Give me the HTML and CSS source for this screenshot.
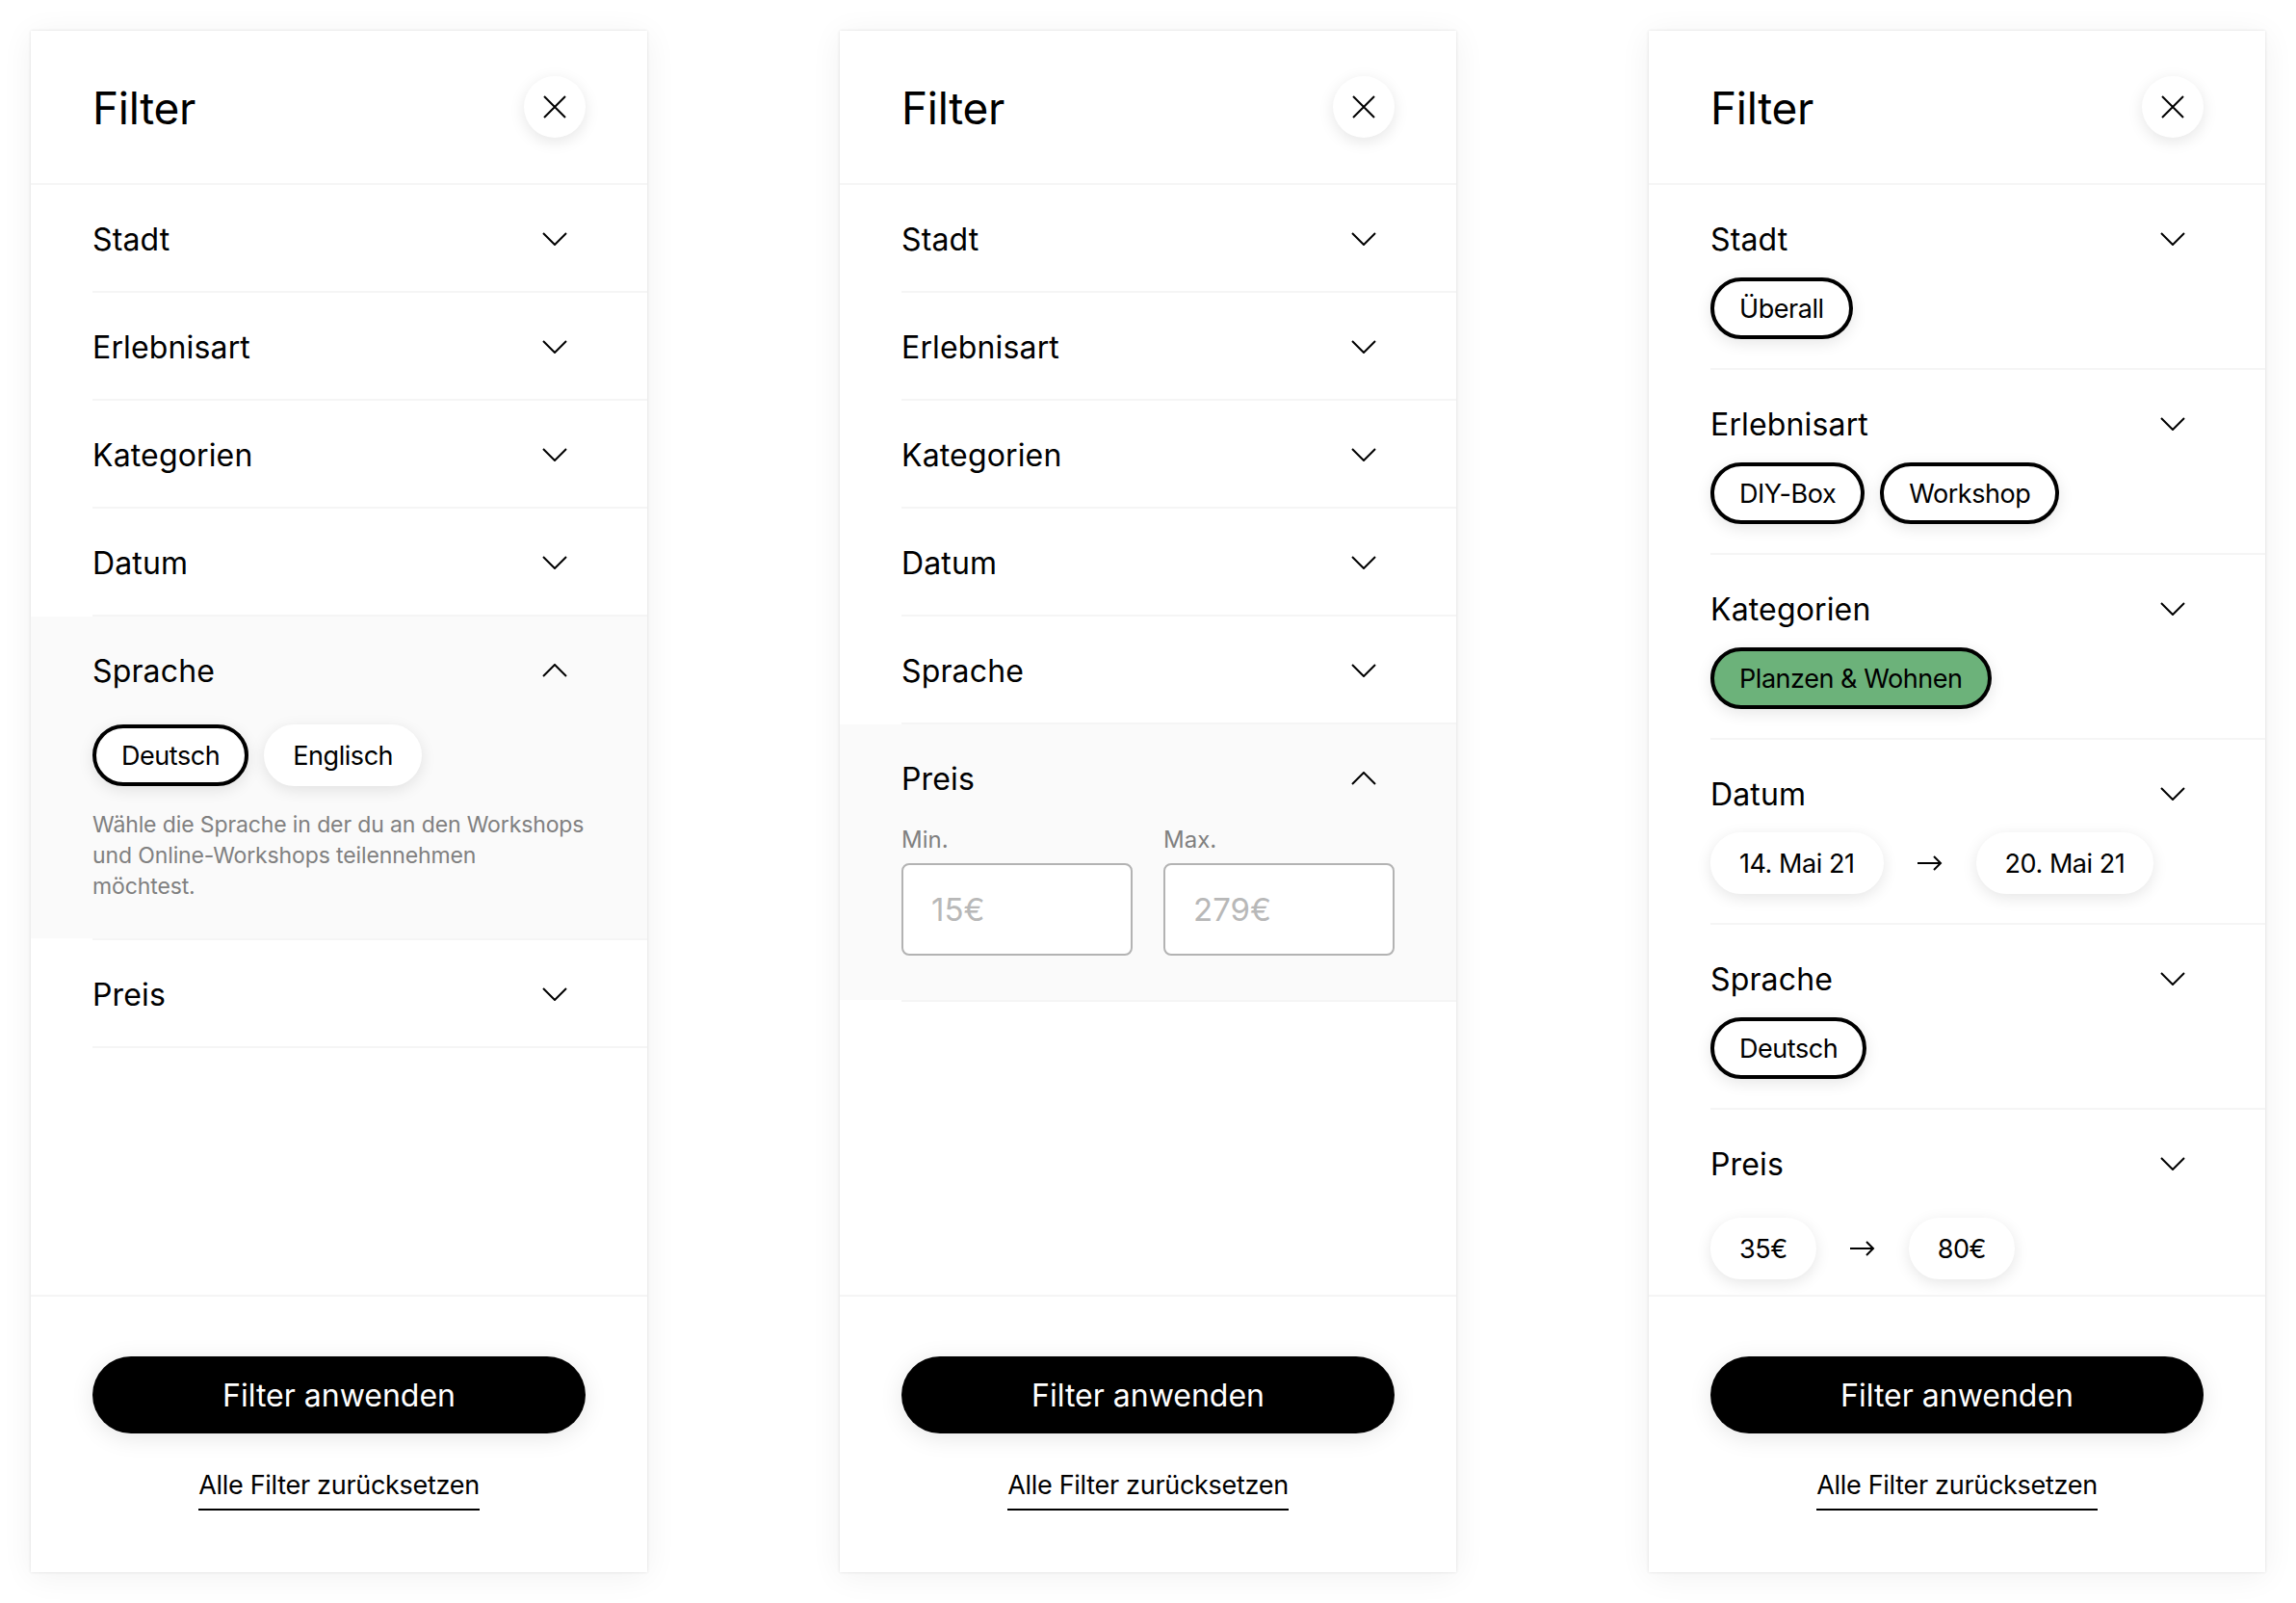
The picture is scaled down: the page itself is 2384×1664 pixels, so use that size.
FILE: index.html
```html
<!DOCTYPE html>
<html lang="de">
<head>
    <meta charset="UTF-8">
    <title>Filter</title>
    <link rel="stylesheet" href="styles.css">
</head>
<body>
    <svg class="sprite" width="0" height="0">
        <symbol id="i-chevron" viewBox="0 0 26 14"><path d="M1 1l12 12L25 1" fill="none" stroke="currentColor" stroke-width="2"/></symbol>
        <symbol id="i-close" viewBox="0 0 24 24"><path d="M1 1l22 22M23 1L1 23" fill="none" stroke="currentColor" stroke-width="2"/></symbol>
        <symbol id="i-arrow" viewBox="0 0 26 16"><path d="M0 8h24M17 1l7 7-7 7" fill="none" stroke="currentColor" stroke-width="2"/></symbol>
    </svg>

    <div class="screens">
        <!-- Sprache open -->
        <div class="panel">
            <div class="panel-head">
                <h1>Filter</h1>
                <button class="close-btn"><svg class="icon-close"><use href="#i-close"/></svg></button>
            </div>
            <div class="filter-list">
                <div class="filter-item"><div class="filter-head"><span>Stadt</span><svg class="chevron"><use href="#i-chevron"/></svg></div></div>
                <div class="filter-item"><div class="filter-head"><span>Erlebnisart</span><svg class="chevron"><use href="#i-chevron"/></svg></div></div>
                <div class="filter-item"><div class="filter-head"><span>Kategorien</span><svg class="chevron"><use href="#i-chevron"/></svg></div></div>
                <div class="filter-item"><div class="filter-head"><span>Datum</span><svg class="chevron"><use href="#i-chevron"/></svg></div></div>
                <div class="filter-item open">
                    <div class="filter-head"><span>Sprache</span><svg class="chevron up"><use href="#i-chevron"/></svg></div>
                    <div class="chips">
                        <span class="chip selected">Deutsch</span>
                        <span class="chip">Englisch</span>
                    </div>
                    <p class="hint">Wähle die Sprache in der du an den Workshops<br>und Online-Workshops teilennehmen<br>möchtest.</p>
                </div>
                <div class="filter-item"><div class="filter-head"><span>Preis</span><svg class="chevron"><use href="#i-chevron"/></svg></div></div>
            </div>
            <div class="panel-foot">
                <button class="apply-btn">Filter anwenden</button>
                <a href="#" class="reset-link">Alle Filter zurücksetzen</a>
            </div>
        </div>

        <!-- Preis open -->
        <div class="panel">
            <div class="panel-head">
                <h1>Filter</h1>
                <button class="close-btn"><svg class="icon-close"><use href="#i-close"/></svg></button>
            </div>
            <div class="filter-list">
                <div class="filter-item"><div class="filter-head"><span>Stadt</span><svg class="chevron"><use href="#i-chevron"/></svg></div></div>
                <div class="filter-item"><div class="filter-head"><span>Erlebnisart</span><svg class="chevron"><use href="#i-chevron"/></svg></div></div>
                <div class="filter-item"><div class="filter-head"><span>Kategorien</span><svg class="chevron"><use href="#i-chevron"/></svg></div></div>
                <div class="filter-item"><div class="filter-head"><span>Datum</span><svg class="chevron"><use href="#i-chevron"/></svg></div></div>
                <div class="filter-item"><div class="filter-head"><span>Sprache</span><svg class="chevron"><use href="#i-chevron"/></svg></div></div>
                <div class="filter-item open">
                    <div class="filter-head"><span>Preis</span><svg class="chevron up"><use href="#i-chevron"/></svg></div>
                    <div class="price-fields">
                        <label class="price-field">Min.<input type="text" placeholder="15€"></label>
                        <label class="price-field">Max.<input type="text" placeholder="279€"></label>
                    </div>
                </div>
            </div>
            <div class="panel-foot">
                <button class="apply-btn">Filter anwenden</button>
                <a href="#" class="reset-link">Alle Filter zurücksetzen</a>
            </div>
        </div>

        <!-- Everything selected -->
        <div class="panel">
            <div class="panel-head">
                <h1>Filter</h1>
                <button class="close-btn"><svg class="icon-close"><use href="#i-close"/></svg></button>
            </div>
            <div class="filter-list">
                <div class="filter-item summary">
                    <div class="filter-head"><span>Stadt</span><svg class="chevron"><use href="#i-chevron"/></svg></div>
                    <div class="chips"><span class="chip selected">Überall</span></div>
                </div>
                <div class="filter-item summary">
                    <div class="filter-head"><span>Erlebnisart</span><svg class="chevron"><use href="#i-chevron"/></svg></div>
                    <div class="chips"><span class="chip selected">DIY-Box</span><span class="chip selected">Workshop</span></div>
                </div>
                <div class="filter-item summary">
                    <div class="filter-head"><span>Kategorien</span><svg class="chevron"><use href="#i-chevron"/></svg></div>
                    <div class="chips"><span class="chip selected green">Planzen &amp; Wohnen</span></div>
                </div>
                <div class="filter-item summary">
                    <div class="filter-head"><span>Datum</span><svg class="chevron"><use href="#i-chevron"/></svg></div>
                    <div class="chips range"><span class="chip">14. Mai 21</span><svg class="arrow"><use href="#i-arrow"/></svg><span class="chip">20. Mai 21</span></div>
                </div>
                <div class="filter-item summary">
                    <div class="filter-head"><span>Sprache</span><svg class="chevron"><use href="#i-chevron"/></svg></div>
                    <div class="chips"><span class="chip selected">Deutsch</span></div>
                </div>
                <div class="filter-item summary price-summary">
                    <div class="filter-head"><span>Preis</span><svg class="chevron"><use href="#i-chevron"/></svg></div>
                    <div class="chips range"><span class="chip">35€</span><svg class="arrow"><use href="#i-arrow"/></svg><span class="chip">80€</span></div>
                </div>
            </div>
            <div class="panel-foot">
                <button class="apply-btn">Filter anwenden</button>
                <a href="#" class="reset-link">Alle Filter zurücksetzen</a>
            </div>
        </div>
    </div>
</body>
</html>
```

FILE: styles.css
```css
* {
    margin: 0;
    padding: 0;
    box-sizing: border-box;
}

body {
    font-family: 'Inter', 'Liberation Sans', sans-serif;
    background: white;
    color: black;
}

.sprite {
    display: block;
    height: 0;
}

.screens {
    display: flex;
    gap: 200px;
    padding: 32px;
}

.panel {
    width: 640px;
    height: 1600px;
    display: flex;
    flex-direction: column;
    background: white;
    box-shadow: 0 0 3px rgba(0,0,0,0.12), 0 4px 32px rgba(0,0,0,0.06);
}

.panel-head {
    height: 160px;
    flex: none;
    display: flex;
    align-items: center;
    justify-content: space-between;
    padding: 0 64px;
    border-bottom: 2px solid #f5f5f5;
}

h1 {
    padding-top: 2px;
    font-size: 46px;
    font-weight: 400;
    letter-spacing: -0.3px;
}

.close-btn {
    width: 64px;
    height: 64px;
    display: flex;
    align-items: center;
    justify-content: center;
    border: none;
    border-radius: 50%;
    background: white;
    color: black;
    box-shadow: 0 4px 16px rgba(0,0,0,0.1);
}

.icon-close {
    width: 24px;
    height: 24px;
}

.filter-list {
    flex: 1;
    overflow: hidden;
}

.filter-item {
    margin-left: 64px;
    padding-right: 64px;
    border-bottom: 2px solid #f5f5f5;
}

.filter-item.open {
    margin-left: 0;
    padding-left: 64px;
    padding-bottom: 2px;
    border-bottom: none;
    background:
        linear-gradient(90deg, transparent 64px, #f5f5f5 64px) bottom / 100% 2px no-repeat,
        linear-gradient(#fafafa, #fafafa) top / 100% calc(100% - 2px) no-repeat;
}

.filter-head {
    height: 110px;
    display: flex;
    align-items: center;
    justify-content: space-between;
    padding: 2px 19px 0 0;
    font-size: 32px;
    letter-spacing: 0.15px;
}

.chevron {
    width: 26px;
    height: 14px;
}

.chevron.up {
    transform: rotate(180deg);
}

.open .filter-head {
    height: 112px;
    padding-top: 0;
}

.summary {
    height: 192px;
}

.summary .filter-head {
    height: 96px;
    padding: 16px 19px 0 0;
}

.price-summary {
    height: auto;
    border-bottom: none;
}

.price-summary .filter-head {
    height: 112px;
    padding: 0 19px 0 0;
}

.chips {
    display: flex;
    align-items: center;
    gap: 16px;
}

.chip {
    height: 64px;
    display: flex;
    align-items: center;
    padding: 0 26px;
    border: 4px solid white;
    border-radius: 32px;
    background: white;
    font-size: 27px;
    letter-spacing: -0.45px;
    white-space: nowrap;
    box-shadow: 0 4px 16px rgba(0,0,0,0.1);
}

.chip.selected {
    border-color: black;
}

.chip.green {
    background: #6cb27a;
}

.chips.range {
    gap: 35px;
}

.arrow {
    width: 26px;
    height: 16px;
}

.hint {
    margin-top: 24px;
    padding-bottom: 38px;
    font-size: 23px;
    line-height: 32px;
    color: #808080;
    letter-spacing: -0.12px;
}

.price-fields {
    display: flex;
    gap: 32px;
    margin-top: -8px;
    padding-bottom: 46px;
}

.price-field {
    width: 240px;
    font-size: 24px;
    line-height: 32px;
    color: #808080;
}

.price-field input {
    display: block;
    width: 100%;
    height: 96px;
    margin-top: 8px;
    padding: 0 29px;
    border: 2px solid #b3b3b3;
    border-radius: 8px;
    background: white;
    font-family: inherit;
    font-size: 33px;
}

.price-field input::placeholder {
    color: #b8b8b8;
    opacity: 1;
}

.panel-foot {
    height: 288px;
    flex: none;
    display: flex;
    flex-direction: column;
    align-items: center;
    padding: 62px 64px 0;
    border-top: 2px solid #f5f5f5;
}

.apply-btn {
    width: 100%;
    height: 80px;
    flex: none;
    border: none;
    border-radius: 40px;
    background: black;
    color: white;
    font-family: inherit;
    font-size: 32px;
    letter-spacing: 0;
    box-shadow: 0 4px 24px rgba(0,0,0,0.1);
}

.reset-link {
    margin-top: 36px;
    padding-bottom: 6px;
    border-bottom: 2px solid black;
    color: black;
    font-size: 27px;
    line-height: 36px;
    letter-spacing: -0.3px;
    text-decoration: none;
}
```
